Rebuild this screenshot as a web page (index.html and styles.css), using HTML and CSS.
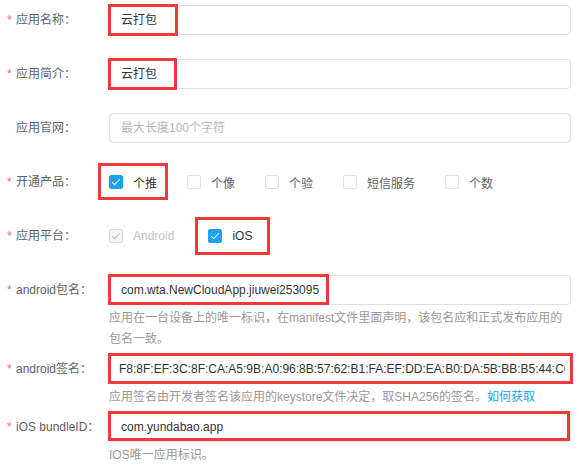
FILE: index.html
```html
<!DOCTYPE html>
<html lang="zh-CN">
<head>
    <meta charset="UTF-8">
    <title>应用信息</title>
    <meta name="viewport" content="width=device-width, initial-scale=1">
    <link rel="stylesheet" href="styles.css">
</head>
<body>
    <form class="app-form">
        <div class="form-item">
            <label class="item-label"><span class="req">*</span>应用名称：</label>
            <div class="item-content">
                <div class="text-input"><span class="value">云打包</span><span class="mark mark-name"></span></div>
            </div>
        </div>
        <div class="form-item">
            <label class="item-label"><span class="req">*</span>应用简介：</label>
            <div class="item-content">
                <div class="text-input"><span class="value">云打包</span><span class="mark mark-intro"></span></div>
            </div>
        </div>
        <div class="form-item">
            <label class="item-label">应用官网：</label>
            <div class="item-content">
                <div class="text-input placeholder"><span class="value">最大长度100个字符</span></div>
            </div>
        </div>
        <div class="form-item">
            <label class="item-label"><span class="req">*</span>开通产品：</label>
            <div class="item-content check-group">
                <span class="check-item is-checked"><span class="box"></span>个推<span class="mark mark-push"></span></span>
                <span class="check-item"><span class="box"></span>个像</span>
                <span class="check-item"><span class="box"></span>个验</span>
                <span class="check-item"><span class="box"></span>短信服务</span>
                <span class="check-item"><span class="box"></span>个数</span>
            </div>
        </div>
        <div class="form-item">
            <label class="item-label"><span class="req">*</span>应用平台：</label>
            <div class="item-content check-group">
                <span class="check-item is-disabled platform"><span class="box"></span>Android</span>
                <span class="check-item is-checked"><span class="box"></span>iOS<span class="mark mark-ios"></span></span>
            </div>
        </div>
        <div class="form-item has-help">
            <label class="item-label"><span class="req">*</span>android包名：</label>
            <div class="item-content">
                <div class="text-input"><span class="value">com.wta.NewCloudApp.jiuwei253095</span><span class="mark mark-package"></span></div>
                <p class="help">应用在一台设备上的唯一标识，在manifest文件里面声明，该包名应和正式发布应用的包名一致。</p>
            </div>
        </div>
        <div class="form-item has-help">
            <label class="item-label"><span class="req">*</span>android签名：</label>
            <div class="item-content">
                <div class="text-input sign-input"><span class="value">F8:8F:EF:3C:8F:CA:A5:9B:A0:96:8B:57:62:B1:FA:EF:DD:EA:B0:DA:5B:BB:B5:44:C6:2A</span><span class="mark mark-sign"></span></div>
                <p class="help">应用签名由开发者签名该应用的keystore文件决定，取SHA256的签名。<a href="#" class="link">如何获取</a></p>
            </div>
        </div>
        <div class="form-item has-help">
            <label class="item-label"><span class="req">*</span>iOS bundleID：</label>
            <div class="item-content">
                <div class="text-input"><span class="value">com.yundabao.app</span><span class="mark mark-bundle"></span></div>
                <p class="help">IOS唯一应用标识。</p>
            </div>
        </div>
    </form>
</body>
</html>
```

FILE: styles.css
```css
body {
    margin: 0;
    background: #ffffff;
    font-family: "Liberation Sans", "Noto Sans CJK SC", sans-serif;
    font-size: 12px;
    color: #333333;
}
.app-form {
    padding: 5px 8px 0 0;
}
.form-item {
    display: flex;
    margin-bottom: 24px;
}
.form-item.has-help {
    margin-bottom: 4px;
}
.item-label {
    width: 109px;
    flex-shrink: 0;
    padding-left: 16px;
    box-sizing: border-box;
    line-height: 30px;
    color: #606266;
    white-space: nowrap;
}
.req {
    display: inline-block;
    width: 9px;
    margin-left: -9px;
    color: #f56c6c;
}
.item-content {
    flex: 1;
    min-width: 0;
}
.text-input {
    position: relative;
    height: 30px;
    line-height: 28px;
    padding: 0 11px;
    border: 1px solid #dcdfe6;
    border-radius: 4px;
    box-sizing: border-box;
    color: #333333;
}
.text-input .value {
    display: block;
    overflow: hidden;
    white-space: nowrap;
}
.text-input.placeholder {
    color: #b4b6bb;
}
.sign-input {
    padding: 0 5px 0 9px;
}
.help {
    margin: 3px 0 0;
    line-height: 21px;
    color: #999999;
}
.link {
    color: #1e9fff;
    text-decoration: none;
}

/* checkboxes */
.check-group {
    display: flex;
    align-items: center;
    height: 30px;
}
.check-item {
    position: relative;
    display: inline-flex;
    align-items: center;
    height: 30px;
    margin-right: 30px;
    color: #606266;
}
.check-item.platform {
    margin-right: 34px;
}
.box {
    position: relative;
    width: 14px;
    height: 14px;
    margin-right: 10px;
    border: 1px solid #dcdfe6;
    border-radius: 2px;
    box-sizing: border-box;
    background: #ffffff;
}
.is-checked {
    color: #333333;
}
.is-checked .box {
    background: #1ba2ef;
    border-color: #1ba2ef;
}
.is-checked .box::after,
.is-disabled .box::after {
    content: "";
    position: absolute;
    left: 4px;
    top: 1px;
    width: 3px;
    height: 7px;
    border-right: 1px solid #ffffff;
    border-bottom: 1px solid #ffffff;
    transform: rotate(45deg);
}
.is-disabled {
    color: #c0c4cc;
}
.is-disabled .box {
    background: #f2f3f5;
    border-color: #dcdfe6;
}
.is-disabled .box::after {
    border-color: #b8bcc4;
}

/* red annotation frames */
.mark {
    position: absolute;
    border: 3px solid #f23a3a;
    box-sizing: border-box;
    pointer-events: none;
}
.mark-name {
    left: -2px;
    top: -2px;
    width: 70px;
    height: 32px;
}
.mark-intro {
    left: -2px;
    top: -2px;
    width: 69px;
    height: 32px;
}
.mark-package {
    left: -2px;
    top: -2px;
    width: 221px;
    height: 31px;
}
.mark-sign {
    left: -2px;
    right: -3px;
    top: -2px;
    height: 31px;
}
.mark-bundle {
    left: -2px;
    right: 0;
    top: -2px;
    height: 30px;
}
.mark-push {
    left: -11px;
    top: -4px;
    width: 70px;
    height: 37px;
}
.mark-ios {
    left: -13px;
    top: -4px;
    width: 75px;
    height: 38px;
}
```
